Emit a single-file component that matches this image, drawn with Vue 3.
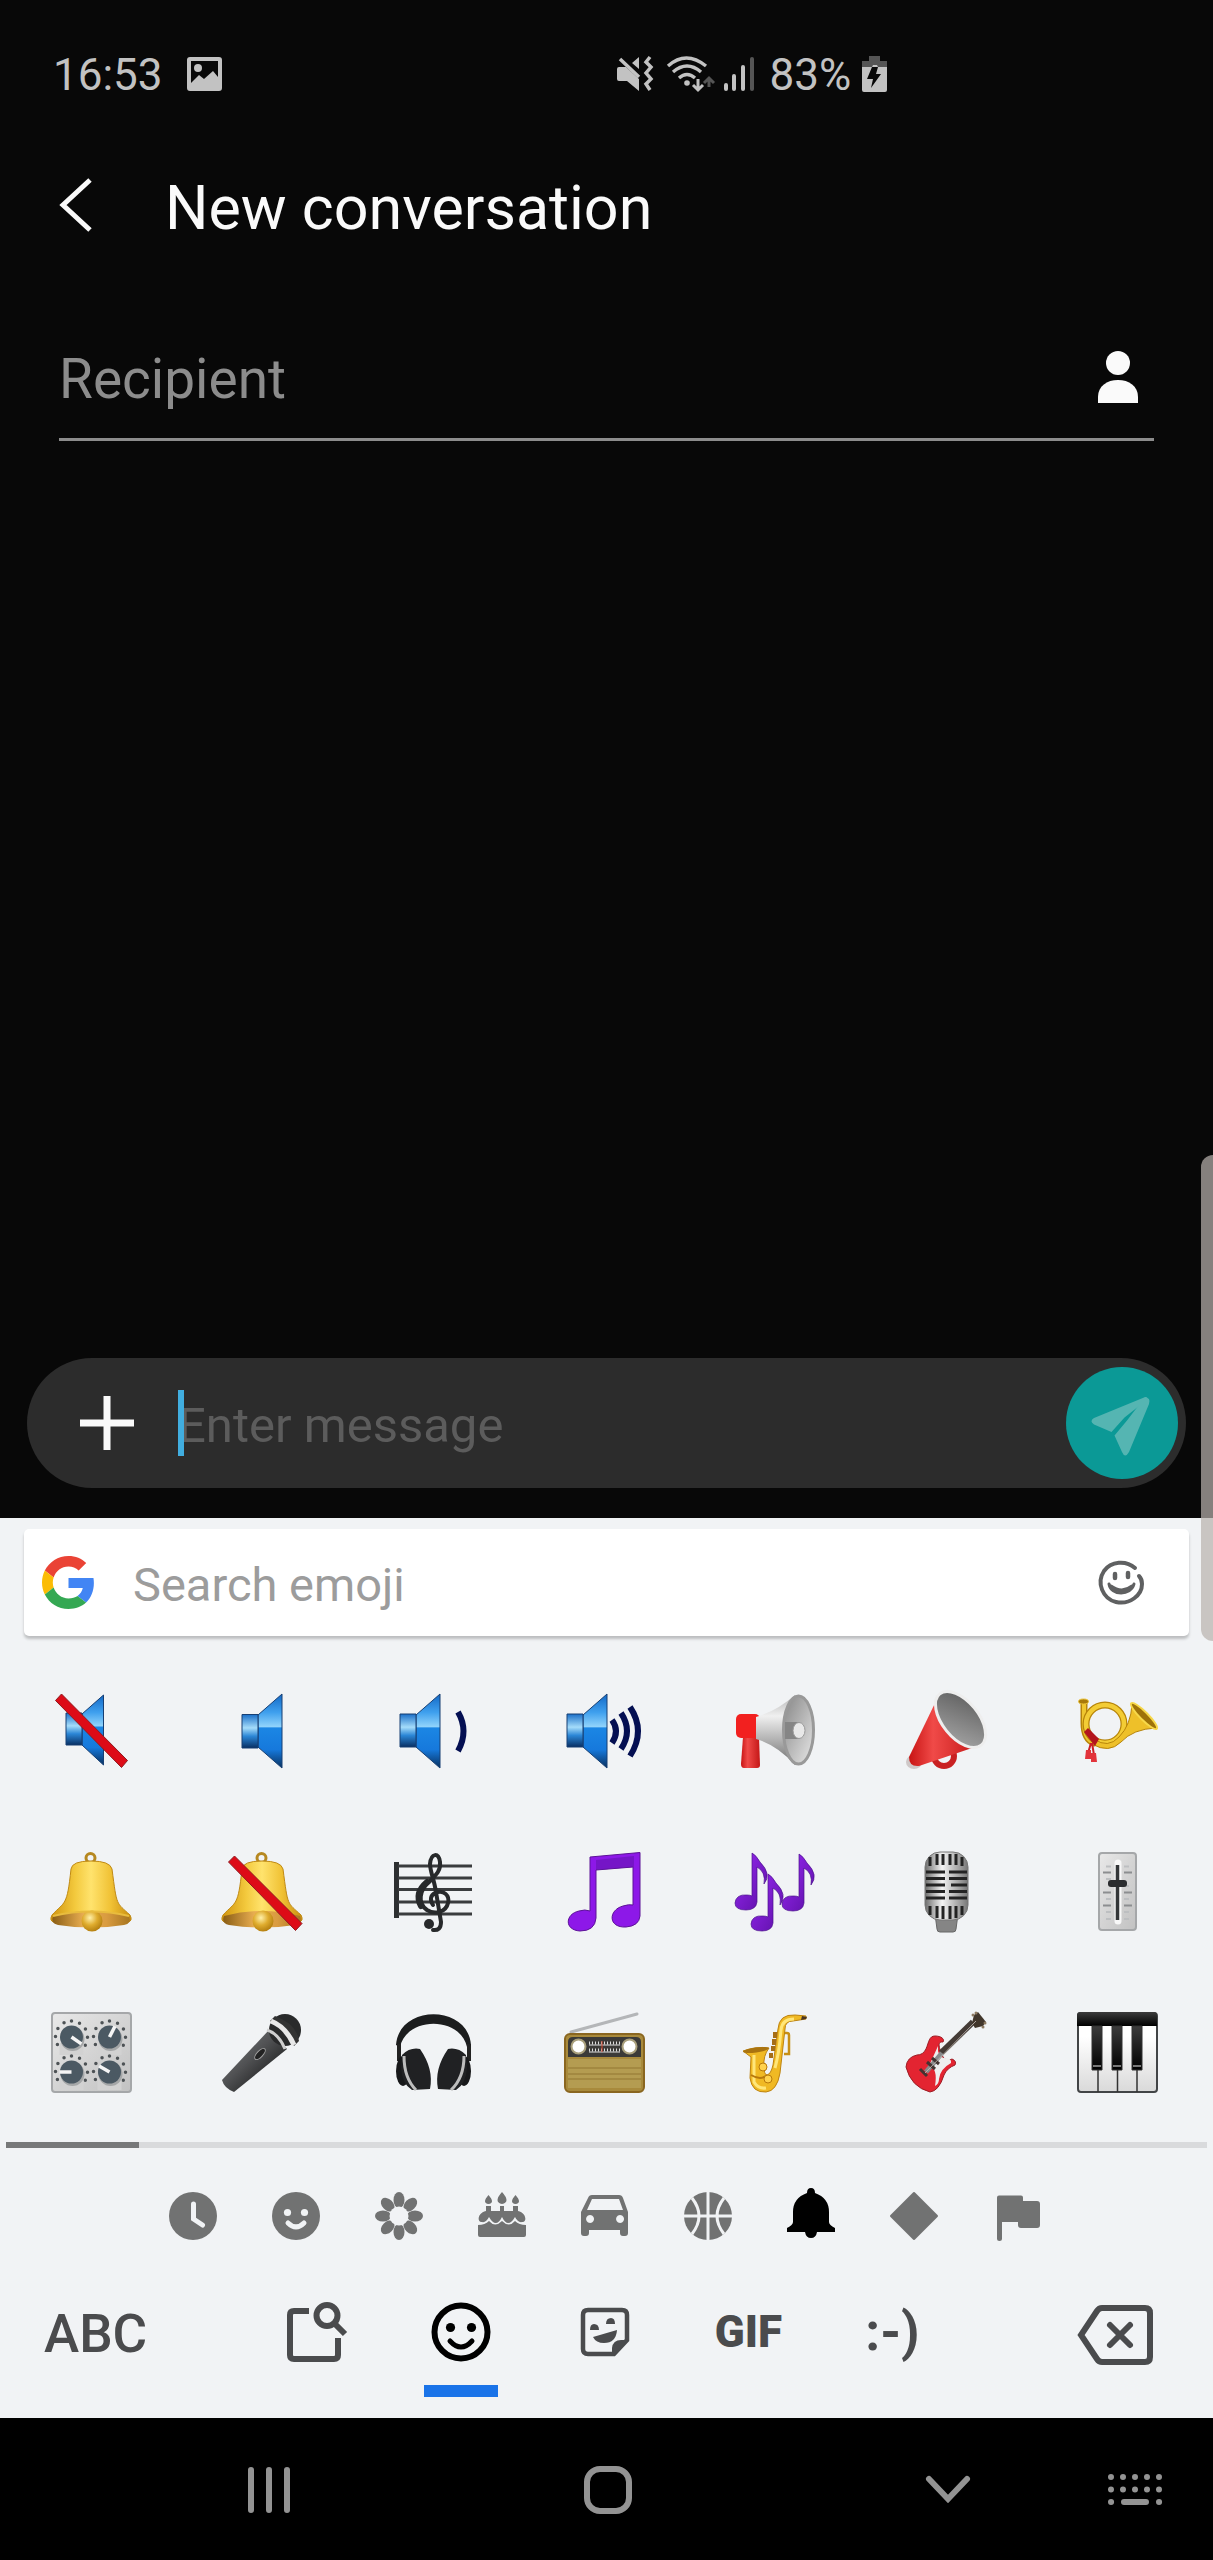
<template>
  <div class="phone">
    <header class="status-bar">
      <div class="status-left">
        <span>16:53</span>
        <svg width="35" height="34" viewBox="0 0 35 34">
          <path fill="#c2c2c2" fill-rule="evenodd" d="M3 0h29a3 3 0 0 1 3 3v28a3 3 0 0 1-3 3H3a3 3 0 0 1-3-3V3a3 3 0 0 1 3-3zM4 4v22l8-8 5 4 9-8 5 6V4z" />
          <circle cx="11" cy="11" r="4" fill="#c2c2c2" />
        </svg>
      </div>
      <div class="status-right">
        <svg class="mute" width="35" height="36" viewBox="0 0 35 36">
          <path fill="#c2c2c2" d="M2 11h7l13 12v12L10 25H2a2 2 0 0 1-2-2V13a2 2 0 0 1 2-2zM22 1v12l-7-6z" />
          <path d="M3 3l19 18M33 1l-4 5 5 5-5 6 5 6-5 5 4 6" fill="none" stroke="#c2c2c2" stroke-width="3.500" />
        </svg>
        <svg class="wifi" width="47" height="36" viewBox="0 0 47 36">
          <g fill="none" stroke="#c2c2c2" stroke-width="3.4">
            <path d="M1 10q18-16 38 0M6 16q14-12 28 0M12 22q8-7 16 0" />
            <path d="M31 23v10M26 29l5 5 5-5" stroke-width="3" />
          </g>
          <circle cx="20" cy="27" r="2.8" fill="#c2c2c2" />
          <path d="M42 31V22M37 27l5-5 5 5" fill="none" stroke="#555" stroke-width="3" />
        </svg>
        <svg class="signal" width="30" height="34" viewBox="0 0 30 34">
          <g stroke="#c2c2c2" stroke-width="4" stroke-linecap="round">
            <path d="M2 28v4M10 19v13M19 10v22" />
            <path d="M28 2v30" stroke="#555" />
          </g>
        </svg>
        <span>83%</span>
        <svg class="battery" width="25" height="36" viewBox="0 0 25 36">
          <path d="M7 0h11v5h7v6H0V5h7z" fill="#555" />
          <path d="M0 11h10l1-2h4l1 2h9v23a2 2 0 0 1-2 2H2a2 2 0 0 1-2-2z" fill="#c2c2c2" />
          <path d="M10 11h6l-2 7h5L9 32l2-9H5z" fill="#080808" />
        </svg>
      </div>
    </header>

    <div class="title-bar">
      <button class="icon-btn" type="button" aria-label="Back">
        <svg width="34" height="54" viewBox="0 0 34 54">
          <path d="M31 1L4 26l27 25" fill="none" stroke="#fafafa" stroke-width="5" />
        </svg>
      </button>
      <h1>New conversation</h1>
    </div>

    <div class="recipient">
      <input v-model="recipient" type="text" placeholder="Recipient" aria-label="Recipient">
      <button class="icon-btn" type="button" aria-label="Contacts">
        <svg width="40" height="52" viewBox="0 0 40 52">
          <circle cx="20" cy="12" r="12" fill="#fafafa" />
          <path d="M0 52V46C0 35 9 29 20 29s20 6 20 17v6z" fill="#fafafa" />
        </svg>
      </button>
    </div>

    <main class="thread"></main>

    <form class="compose" @submit.prevent>
      <button class="icon-btn" type="button" aria-label="Attach">
        <svg width="54" height="54" viewBox="0 0 54 54">
          <path d="M27 0v54M0 27h54" stroke="#fafafa" stroke-width="7" />
        </svg>
      </button>
      <div class="message-field">
        <input v-model="message" type="text" placeholder="Enter message" aria-label="Message">
      </div>
      <button class="send-btn" type="submit" aria-label="Send">
        <svg width="112" height="112" viewBox="0 0 112 112">
          <g fill="#55b5b2">
            <path d="M78 30.500Q81 29 82 32L58.500 50.500 45.500 65 28 57.500Q23 54 28 51z" />
            <path d="M83 32Q84 34 83 37L63 85Q59 92 56 85L48.500 68.500 61 53.500 79 30z" />
          </g>
        </svg>
      </button>
    </form>

    <section class="keyboard">
      <div class="search">
        <svg width="53" height="53" viewBox="0 0 48 48">
          <path fill="#ea4335" d="M24 9.500c3.540 0 6.710 1.220 9.210 3.600l6.850-6.850C35.900 2.380 30.470 0 24 0 14.620 0 6.510 5.380 2.560 13.220l7.980 6.190C12.430 13.720 17.740 9.500 24 9.500z" />
          <path fill="#4285f4" d="M46.980 24.550c0-1.570-.15-3.090-.38-4.550H24v9.020h12.940c-.58 2.960-2.260 5.480-4.780 7.180l7.730 6c4.510-4.180 7.090-10.360 7.090-17.650z" />
          <path fill="#fbbc05" d="M10.530 28.590c-.48-1.450-.76-2.990-.76-4.590s.27-3.140.76-4.590l-7.980-6.190C.92 16.460 0 20.120 0 24c0 3.880.92 7.540 2.560 10.780l7.970-6.190z" />
          <path fill="#34a853" d="M24 48c6.480 0 11.930-2.130 15.890-5.810l-7.730-6c-2.150 1.450-4.920 2.300-8.160 2.300-6.260 0-11.570-4.220-13.470-9.910l-7.980 6.190C6.510 42.620 14.620 48 24 48z" />
        </svg>
        <input v-model="query" type="text" placeholder="Search emoji" aria-label="Search emoji">
        <button class="icon-btn" type="button" aria-label="Draw emoji">
          <svg width="48" height="44" viewBox="0 0 48 44">
            <g fill="none" stroke="#5f6061" stroke-width="4" stroke-linecap="round">
              <path d="M37 7C28-1 13 0 6 10-2 22 5 38 18 41c14 3 26-7 26-18q0-5-3-8" />
              <path d="M17 13v4M30 12v4" stroke-width="4.500" />
              <path d="M11 23c2 12 22 12 25 0M13 25q11 8 21 0" stroke-width="3" />
            </g>
          </svg>
        </button>
      </div>

      <!-- shared gradients for the emoji drawings -->
      <svg class="defs" width="0" height="0" aria-hidden="true">
        <defs>
          <linearGradient id="blue" x1="0" y1="0" x2="0" y2="1">
            <stop offset="0" stop-color="#1268c6" />
            <stop offset=".25" stop-color="#3fa0ee" />
            <stop offset=".44" stop-color="#90d3fb" />
            <stop offset=".46" stop-color="#1b86e4" />
            <stop offset=".75" stop-color="#1679dc" />
            <stop offset="1" stop-color="#08305f" />
          </linearGradient>
          <linearGradient id="blueBox" x1="0" y1="0" x2="0" y2="1">
            <stop offset="0" stop-color="#1a6fc8" />
            <stop offset=".4" stop-color="#a5dcfa" />
            <stop offset=".65" stop-color="#2b86d6" />
            <stop offset="1" stop-color="#082f63" />
          </linearGradient>
          <linearGradient id="gold" x1="0" y1="0" x2="1" y2="0">
            <stop offset="0" stop-color="#d0940f" />
            <stop offset=".3" stop-color="#f3c93d" />
            <stop offset=".5" stop-color="#ffe36d" />
            <stop offset=".75" stop-color="#f0c134" />
            <stop offset="1" stop-color="#c98d10" />
          </linearGradient>
          <linearGradient id="rim" x1="0" y1="0" x2="1" y2="0">
            <stop offset="0" stop-color="#8a5d14" />
            <stop offset=".4" stop-color="#e8ad51" />
            <stop offset=".7" stop-color="#d99b40" />
            <stop offset="1" stop-color="#a87620" />
          </linearGradient>
          <radialGradient id="ball" cx=".4" cy=".35" r=".7">
            <stop offset="0" stop-color="#fff0a8" />
            <stop offset=".5" stop-color="#dfac2e" />
            <stop offset="1" stop-color="#b07a0c" />
          </radialGradient>
          <linearGradient id="silver" x1="0" y1="0" x2="0" y2="1">
            <stop offset="0" stop-color="#b5b5b5" />
            <stop offset=".3" stop-color="#f0f0f0" />
            <stop offset=".65" stop-color="#b0b0b0" />
            <stop offset="1" stop-color="#6e6e6e" />
          </linearGradient>
          <linearGradient id="dish" x1="0" y1="0" x2="1" y2="1">
            <stop offset="0" stop-color="#858585" />
            <stop offset="1" stop-color="#e8e8e8" />
          </linearGradient>
          <linearGradient id="inner" x1="0" y1="0" x2="1" y2="1">
            <stop offset="0" stop-color="#5a5a5a" />
            <stop offset="1" stop-color="#a9a9a9" />
          </linearGradient>
          <linearGradient id="red" x1="0" y1="0" x2="1" y2="0">
            <stop offset="0" stop-color="#c81414" />
            <stop offset=".35" stop-color="#f04a48" />
            <stop offset="1" stop-color="#c41717" />
          </linearGradient>
          <linearGradient id="purple" x1="0" y1="0" x2="1" y2="1">
            <stop offset="0" stop-color="#9a2af5" />
            <stop offset="1" stop-color="#5c0fa5" />
          </linearGradient>
          <linearGradient id="panel" x1="0" y1="0" x2="1" y2="1">
            <stop offset="0" stop-color="#e9e9e9" />
            <stop offset=".5" stop-color="#d4d4d4" />
            <stop offset="1" stop-color="#c2c2c2" />
          </linearGradient>
          <linearGradient id="steel" x1="0" y1="0" x2="1" y2="0">
            <stop offset="0" stop-color="#6d6d6d" />
            <stop offset=".4" stop-color="#f4f4f4" />
            <stop offset="1" stop-color="#777" />
          </linearGradient>
          <linearGradient id="grip" x1="0" y1="0" x2="1" y2="1">
            <stop offset=".2" stop-color="#6b6c6e" />
            <stop offset=".45" stop-color="#505153" />
            <stop offset=".7" stop-color="#2c2d2e" />
          </linearGradient>
          <linearGradient id="black" x1="0" y1="0" x2="0" y2="1">
            <stop offset="0" stop-color="#3c3c3c" />
            <stop offset="1" stop-color="#000" />
          </linearGradient>
          <linearGradient id="keys" x1="0" y1="0" x2="0" y2="1">
            <stop offset=".3" stop-color="#fff" />
            <stop offset="1" stop-color="#d9d9d9" />
          </linearGradient>
        </defs>
      </svg>

      <div class="emoji-grid">
        <button type="button" aria-label="Muted speaker">
          <svg viewBox="0 0 81 81">
            <path d="M31 23L52.500 4v70L31 54z" fill="url(#blue)" stroke="#173f73" />
            <path d="M15 22h16v32H15z" fill="url(#blueBox)" stroke="#173f73" />
            <path d="M4.500 9.500l6-6.500 66 66.500-6 7z" fill="#dd0b17" stroke="#8f1a1f" />
          </svg>
        </button>
        <button type="button" aria-label="Speaker low volume">
          <svg viewBox="0 0 81 81">
            <path d="M36 24L60 3v74L36 56z" fill="url(#blue)" stroke="#173f73" />
            <path d="M20 23.500h16v33.500H20z" fill="url(#blueBox)" stroke="#173f73" />
          </svg>
        </button>
        <button type="button" aria-label="Speaker medium volume">
          <svg viewBox="0 0 81 81">
            <path d="M23 24L47 3v74L23 56z" fill="url(#blue)" stroke="#173f73" />
            <path d="M7 23h16v33H7z" fill="url(#blueBox)" stroke="#173f73" />
            <path d="M65 21q11 19 0 39" fill="none" stroke="#040f52" stroke-width="6" />
          </svg>
        </button>
        <button type="button" aria-label="Speaker high volume">
          <svg viewBox="0 0 81 81">
            <path d="M19 24L43 3v74L19 56z" fill="url(#blue)" stroke="#173f73" />
            <path d="M3 23h16v33H3z" fill="url(#blueBox)" stroke="#173f73" />
            <path d="M48 29q8 11 0 23M57 22q12 18 0 36M66 16q16 24 0 49" fill="none" stroke="#040f52" stroke-width="6" />
          </svg>
        </button>
        <button type="button" aria-label="Loudspeaker">
          <svg viewBox="0 0 81 81">
            <path d="M8 46h16l1 28q0 3-3 3H9q-3 0-3-4z" fill="url(#red)" />
            <rect x="1" y="23" width="24" height="24" rx="5" fill="#f2201f" />
            <path d="M21 26Q42 20 60 4v70Q42 54 21 48z" fill="url(#silver)" />
            <ellipse cx="63.500" cy="39" rx="15" ry="34" fill="url(#dish)" stroke="#999" stroke-width="3" />
            <path d="M50 31h14v17H50z" fill="#858585" />
            <ellipse cx="64" cy="39.500" rx="6" ry="8" fill="#e8e8e8" stroke="#999" />
          </svg>
        </button>
        <button type="button" aria-label="Megaphone">
          <svg viewBox="0 0 81 81">
            <circle cx="38" cy="65" r="10" fill="none" stroke="#c92122" stroke-width="6" />
            <ellipse cx="8" cy="71" rx="8" ry="7" fill="#cfc8c8" />
            <path d="M31 8L3 66q0 10 10 9l59-20z" fill="url(#red)" />
            <ellipse cx="54.500" cy="28.500" rx="33" ry="18" transform="rotate(51 54.500 28.500)" fill="url(#inner)" stroke="#eee" stroke-width="3" />
          </svg>
        </button>
        <button type="button" aria-label="Postal horn">
          <svg viewBox="0 0 81 81">
            <g fill="none" stroke-linecap="round">
              <path d="M7 12v20q0 16 10 20" stroke="#b78409" stroke-width="7" />
              <path d="M7 12v20q0 16 10 20" stroke="#efc62f" stroke-width="4" />
              <circle cx="28" cy="33" r="19" stroke="#b78409" stroke-width="7" />
              <circle cx="28" cy="33" r="19" stroke="#f3cc35" stroke-width="4.500" />
            </g>
            <path d="M17 48q14 10 25-2 12-12 13-33l24 24Q56 38 44 51 32 63 15 53z" fill="#eec029" stroke="#b78409" />
            <ellipse cx="67" cy="25" rx="18" ry="4" transform="rotate(45 67 25)" fill="#9e7209" stroke="#f7d849" stroke-width="2" />
            <ellipse cx="6.500" cy="10.500" rx="5" ry="2.500" fill="#a8790b" stroke="#edc437" />
            <path d="M7 41l4-4 11 11-4 7z" fill="#b3151d" />
            <path d="M14 52l-3 10M15 52l2 12" stroke="#cc1d25" stroke-width="2" />
            <path d="M9 59h5v9H8zM14 62h5l1 9h-6z" fill="#e2333b" />
          </svg>
        </button>

        <button type="button" aria-label="Bell">
          <svg viewBox="0 0 81 81">
            <circle cx="39.500" cy="6" r="4.500" fill="none" stroke="#b68820" stroke-width="3" />
            <path d="M20 17Q21 9 40 9t21 8c5 38 4 33 18 46q3 6-2 7-37 8-74 0-5-1-2-7C14 49 16 55 20 17z" fill="url(#gold)" stroke="#c08a14" />
            <path d="M2 64q38-10 76 0 3 8-5 9-33 5-66 0-8-2-5-9z" fill="url(#rim)" />
            <circle cx="41" cy="69" r="10.500" fill="url(#ball)" />
            <path d="M2 64q38-9 76 0" fill="none" stroke="#e9bc3e" stroke-width="2" />
          </svg>
        </button>
        <button type="button" aria-label="Muted bell">
          <svg viewBox="0 0 81 81">
            <circle cx="39.500" cy="6" r="4.500" fill="none" stroke="#b68820" stroke-width="3" />
            <path d="M20 17Q21 9 40 9t21 8c5 38 4 33 18 46q3 6-2 7-37 8-74 0-5-1-2-7C14 49 16 55 20 17z" fill="url(#gold)" stroke="#c08a14" />
            <path d="M2 64q38-10 76 0 3 8-5 9-33 5-66 0-8-2-5-9z" fill="url(#rim)" />
            <circle cx="41" cy="69" r="10.500" fill="url(#ball)" />
            <path d="M6.500 10l6-6L80 71.500l-6.500 7z" fill="#dd0b17" stroke="#8f1a1f" />
          </svg>
        </button>
        <button type="button" aria-label="Musical score">
          <svg viewBox="0 0 81 81">
            <path d="M1 10h5v56H1z" fill="#2d2f31" />
            <path d="M5 14h74M5 26h74M5 37.500h74M5 50h74M5 62h74" stroke="#3a3c3e" stroke-width="3" />
            <g fill="none" stroke="#27292b" stroke-linecap="round">
              <path d="M40 53q-5-8 2-12c9-4 15 3 13 10-2 9-13 12-21 7-10-7-7-20 1-27 8-8 13-12 12-21-1-10-9-9-10 2 0 7 4 15 6 28l5 30q0 9-8 8" stroke-width="4" />
              <path d="M28 54q-7-13 6-24" stroke-width="6" />
            </g>
            <circle cx="36" cy="72" r="5" fill="#27292b" />
          </svg>
        </button>
        <button type="button" aria-label="Musical note">
          <svg viewBox="0 0 81 81">
            <path d="M26 5L76 .500V64q-1 10-14 11c-18 1-18-17-3-21q6-2 10-1V15L32 18v48q-1 13-16 13C0 78 1 62 15 59q6-2 11 0z" fill="#8d18e8" stroke="#5c1297" />
            <path d="M32 8l38-4v11L32 18z" fill="#5d11a5" opacity=".5" />
          </svg>
        </button>
        <button type="button" aria-label="Musical notes">
          <svg viewBox="0 0 81 81">
            <g fill="url(#purple)" stroke="#4b118c" stroke-width=".7">
              <path d="M17 1q4 2 8 9 12 12 4 22 2-12-7-17v35q-1 8-11 8-11 0-11-7 1-9 12-8 3 0 5 1z" />
              <path d="M33 22q4 2 8 9 12 12 4 22 2-12-7-17v35q-1 8-11 8-11 0-11-7 1-9 12-8 3 0 5 1z" />
              <path d="M64 2q4 2 8 9 12 12 4 22 2-12-7-17v35q-1 8-11 8-11 0-11-7 1-9 12-8 3 0 5 1z" />
            </g>
          </svg>
        </button>
        <button type="button" aria-label="Studio microphone">
          <svg viewBox="0 0 81 81">
            <path d="M29 62h23l-2 15q0 3-3 3H34q-3 0-3-3z" fill="#858585" stroke="#666" />
            <rect x="19" y="0" width="43" height="68" rx="15" fill="url(#steel)" stroke="#777" />
            <path d="M24 5v9M31 2v11M37 2v11M44 2v11M50 2v11M56 5v9M24 54v9M31 54v12M37 54v13M44 54v13M50 54v12M56 54v9M20 20h19M43 20h18M20 26.500h19M43 26.500h18M20 33h19M45 33h16M20 39.500h19M43 39.500h18M20 46h19M43 46h18" stroke="#232323" stroke-width="3" />
          </svg>
        </button>
        <button type="button" aria-label="Level slider">
          <svg viewBox="0 0 81 81">
            <rect x="22" y="1" width="37" height="77" rx="3" fill="url(#panel)" stroke="#a5a7a9" stroke-width="2" />
            <path d="M41 11v58" stroke="#f8f8f8" stroke-width="7" stroke-linecap="round" />
            <path d="M40.500 13v55" stroke="#333638" stroke-width="3.500" />
            <path d="M29 14.500h5M29 27h5M29 47h5M29 60h5M29 67h5M47 14.500h5M47 34h5M47 47h5M47 60h5M47 67h5" stroke="#bdbfc1" stroke-width="2" />
            <path d="M26 20.500h8M26 40.500h8M26 53.500h8M47 20.500h8M47 40.500h8M47 53.500h8" stroke="#8c8e90" stroke-width="2" />
            <rect x="31" y="28" width="19" height="7" rx="3" fill="#2b2d2f" />
          </svg>
        </button>

        <button type="button" aria-label="Control knobs">
          <svg viewBox="0 0 81 81">
            <rect x="1" y="0" width="79" height="79" rx="3" fill="url(#panel)" stroke="#a5a7a9" stroke-width="2" />
            <g v-for="knob in knobs" :key="knob.id" :transform="`translate(${knob.x} ${knob.y})`">
              <circle r="16" fill="none" stroke="#4d5255" stroke-width="3.500" stroke-linecap="round" stroke-dasharray="0 8.377" transform="rotate(-90)" />
              <path d="M-12 18h24v-12h-24z" fill="#d2d2d2" />
              <circle cx="1" cy="2" r="12" fill="#a5a7a8" />
              <circle r="11.500" fill="#4b5963" />
              <path d="M0 0h12" stroke="#f5f5f5" stroke-width="3.500" :transform="`rotate(${knob.angle})`" />
            </g>
          </svg>
        </button>
        <button type="button" aria-label="Microphone">
          <svg viewBox="0 0 81 81">
            <path d="M47 17L0 67q2 8 12 12l53-43z" fill="url(#grip)" />
            <circle cx="63" cy="17" r="16" fill="#292a2b" />
            <path d="M48 8l5-5q22 8 24 25l-5 5Q66 16 48 8z" fill="#333" />
            <path d="M49 8q15 6 23 24" fill="none" stroke="#e8e8e8" stroke-width="5" />
            <path d="M45 17q12 4 18 19" fill="none" stroke="#cfcfcf" stroke-width="3" />
            <ellipse cx="38" cy="41" rx="7" ry="3" transform="rotate(-47 38 41)" fill="#222" stroke="#a0a0a0" />
          </svg>
        </button>
        <button type="button" aria-label="Headphones">
          <svg viewBox="0 0 81 81">
            <path d="M3 32C6-9 75-9 78 32l-4 2C67 3 14 3 7 34z" fill="#1c1d1e" />
            <path d="M6 31v17M76 31v17" stroke="#222" stroke-width="4" />
            <ellipse cx="10" cy="58" rx="7" ry="15" fill="#17181a" />
            <ellipse cx="71" cy="58" rx="7" ry="15" fill="#17181a" />
            <path d="M9 42q8-8 18-6 14 20 10 40l-18 1Q9 71 8 55zM73 42q-8-8-18-6-14 20-10 40l18 1q10-6 11-22z" fill="#202123" />
            <path d="M11 43q0 22 12 34M71 43q0 22-13 34" fill="none" stroke="#bdbdbd" stroke-width="3" />
          </svg>
        </button>
        <button type="button" aria-label="Radio">
          <svg viewBox="0 0 81 81">
            <path d="M7 19L73 1" stroke="#b4b6b8" stroke-width="3" stroke-linecap="round" />
            <rect x="1" y="21" width="79" height="58" rx="5" fill="#a88a3c" stroke="#8a6620" stroke-width="2" />
            <path d="M4 44V29q0-5 5-5h63q5 0 5 5v15z" fill="#3b3a38" />
            <path d="M4 46h73v29H4z" fill="#b49c51" />
            <path d="M4 55h73M4 61h73M4 66h73" stroke="#927632" />
            <circle cx="14.500" cy="33.500" r="7" fill="#fff" stroke="#aaa07c" stroke-width="2" />
            <circle cx="65.500" cy="33.500" r="7" fill="#fff" stroke="#aaa07c" stroke-width="2" />
            <path d="M25 32h31M25 39h31" stroke="#ddd" />
            <path d="M25 30h31M25 37h31" stroke="#ddd" stroke-width="3" stroke-dasharray="1 2" />
            <path d="M38 28v11" stroke="#d5442d" />
          </svg>
        </button>
        <button type="button" aria-label="Saxophone">
          <svg viewBox="0 0 81 81">
            <path d="M46 20h6q2 0 2 2v19h-5" fill="none" stroke="#c78f16" stroke-width="2.500" />
            <path d="M8 38q13-5 26-3-6 8-5 18 0 9 3 9 4-1 6-10L43 16Q44 1 60 2l11 1v3l-13 2q-8 0-8 8L45 60q-3 18-14 19-14 1-16-14l1-21z" fill="#f0b924" stroke="#bd8310" />
            <path d="M19 42v27q4 7 12 6M40 55q4-14 6-38 1-11 13-11" fill="none" stroke="#ffe679" stroke-width="3" />
            <ellipse cx="21" cy="37" rx="13" ry="2.500" transform="rotate(-8 21 37)" fill="#a97310" />
            <path d="M16 62q10 6 16 0" fill="none" stroke="#b8790b" stroke-width="2" />
            <circle cx="28" cy="54" r="4" fill="#ffd24d" stroke="#b8790b" />
            <circle cx="33" cy="66" r="4" fill="#ffd24d" stroke="#b8790b" />
            <path d="M40 19v6M39 26v6M38 33v5M36 40v5" stroke="#a66e16" stroke-width="4" />
            <path d="M67 3l5 1-1 2-5 1z" fill="#493525" />
          </svg>
        </button>
        <button type="button" aria-label="Guitar">
          <svg viewBox="0 0 81 81">
            <path d="M20 36c3-7 3-13 9-13 6 0 10 3 8 6-7-1-3 8 0 15q4 5 9 2 5 2 3 6-8 3-11 10-5 16-14 17Q5 74 0 54q1-10 11-12 6 0 9-6z" fill="#e32431" stroke="#9c1d25" />
            <path d="M32 33q-1 10 6 12 8 0 7 5-11 6-12 16 0 5-4 7 3-18-6-20z" fill="#eee" />
            <path d="M35 40L67 9" stroke="#443b36" stroke-width="6" />
            <path d="M66 10l2-8 4-3 8 10-3 4-8 2z" fill="#41362b" />
            <g fill="#8d7a61">
              <circle cx="67" cy="2" r="1.500" />
              <circle cx="70" cy="0" r="1.500" />
              <circle cx="79" cy="10" r="1.500" />
              <circle cx="77" cy="14" r="1.500" />
            </g>
            <path d="M20 59l16-19" stroke="#87898a" stroke-width="5" />
            <path d="M14 56l7 7M21 49l8 7M26 45l7 6" stroke="#423331" stroke-width="3" />
            <path d="M19 60L70 8" stroke="#c9c2bb" stroke-width=".8" />
          </svg>
        </button>
        <button type="button" aria-label="Piano keys">
          <svg viewBox="0 0 81 81">
            <rect x="1" y="0" width="79" height="79" rx="3" fill="url(#keys)" stroke="#424446" stroke-width="2" />
            <path d="M21 50v29M40.500 50v29M60 50v29" stroke="#333" stroke-width="1.500" />
            <path d="M0 13V2q0-3 3-3h74q3 0 3 3v11z" fill="url(#black)" />
            <path d="M15 13h10v44H15zM35 13h10v44H35zM55 13h10v44H55z" fill="url(#black)" stroke="#333" />
            <path d="M16 53h8M36 53h8M56 53h8" stroke="#777" stroke-width="2" />
          </svg>
        </button>
      </div>

      <div class="page-track"><div class="page-thumb"></div></div>

      <div class="categories">
        <button type="button" aria-label="Recent">
          <svg viewBox="0 0 48 48">
            <circle cx="24" cy="24" r="24" />
            <path class="cut" d="M24.500 12v15l9 6" />
          </svg>
        </button>
        <button type="button" aria-label="Smileys">
          <svg viewBox="0 0 48 48">
            <circle cx="24" cy="24" r="24" />
            <circle cx="15.500" cy="20.500" r="3.600" fill="#f1f3f5" />
            <circle cx="32.500" cy="20.500" r="3.600" fill="#f1f3f5" />
            <path class="cut" d="M16 31q8 8 16 0" />
          </svg>
        </button>
        <button type="button" aria-label="Nature">
          <svg viewBox="0 0 48 48">
            <ellipse v-for="n in 8" :key="n" cx="24" cy="8" rx="5.500" ry="8" :transform="`rotate(${n * 45} 24 24)`" />
            <circle cx="24" cy="24" r="9.500" fill="#f1f3f5" />
          </svg>
        </button>
        <button type="button" aria-label="Food">
          <svg viewBox="0 0 48 48">
            <path d="M10.500 3q7 8 0 9-7-1 0-9zM24 0q9 10 0 12-9-2 0-12zM37.500 3q7 8 0 9-7-1 0-9z" />
            <path d="M8 14h5v5h9v-5h4v5h9v-5h5v5c9 2 9 12 4 11q-4 1-7-5-7 12-13 0-6 12-13 0-3 6-7 5c-5 1-5-9 4-11z" />
            <path d="M0 33q7 0 11-4 6 7 13 0 7 7 13 0 4 4 11 4v10q0 2-2 2H2q-2 0-2-2z" />
          </svg>
        </button>
        <button type="button" aria-label="Travel">
          <svg viewBox="0 0 48 48">
            <path fill-rule="evenodd" d="M7 6q1-3 4-3h27q3 0 4 3l5 14v21q0 3-3 3h-2q-3 0-3-3v-3H8v3q0 3-3 3H3q-3 0-3-3V20zM11 7L6 18h36L38 7zM9 23a4 4 0 1 0 .1 0zM39 23a4 4 0 1 0 .1 0z" />
          </svg>
        </button>
        <button type="button" aria-label="Activities">
          <svg viewBox="0 0 48 48">
            <circle cx="24" cy="24" r="24" />
            <path d="M24 0v48M0 24h48M8 6q14 18 0 36M40 6q-14 18 0 36" fill="none" stroke="#f1f3f5" stroke-width="3" />
          </svg>
        </button>
        <button class="current" type="button" aria-label="Objects">
          <svg viewBox="0 0 48 48">
            <path d="M24-4q4 0 4 5 14 5 14 19v10q0 3 6 6v4H30q-1 6-6 6t-6-6H0v-4q6-3 6-6V20Q6 6 20 1q0-5 4-5z" />
          </svg>
        </button>
        <button type="button" aria-label="Symbols">
          <svg viewBox="0 0 48 48">
            <path d="M22.500 1Q24-1 25.500 1L47 22.500q2 1.500 0 3L25.500 47q-1.500 2-3 0L1 25.500q-2-1.500 0-3z" />
          </svg>
        </button>
        <button type="button" aria-label="Flags">
          <svg viewBox="0 0 48 48">
            <path d="M6 3.500h22q2 0 2 2V9h14q3 0 3 3v21q0 3-3 3H28q-3 0-3-3v-3H9v16.500q0 2.500-2.500 2.500T4 46.500v-41q0-2 2-2z" />
          </svg>
        </button>
      </div>

      <div class="toolbar">
        <button class="tool abc" type="button">ABC</button>
        <div class="tabs">
          <button class="tool" type="button" aria-label="Sticker search">
            <svg width="60" height="60" viewBox="0 0 60 60">
              <g fill="none" stroke="#4a4b4d" stroke-width="6">
                <path d="M22 9H7q-4 0-4 4v40q0 4 4 4h40q4 0 4-4V36" />
                <circle cx="40" cy="13.500" r="10.500" />
                <path d="M47 21l11 11" />
              </g>
            </svg>
          </button>
          <button class="tool active" type="button" aria-label="Emoji">
            <svg width="60" height="60" viewBox="0 0 60 60">
              <circle cx="30" cy="30" r="26.500" fill="none" stroke="#000" stroke-width="6" />
              <circle cx="19.500" cy="25.500" r="4.600" />
              <circle cx="40.500" cy="25.500" r="4.600" />
              <path d="M19 39q11 12 22 0" fill="none" stroke="#000" stroke-width="5" stroke-linecap="round" />
            </svg>
          </button>
          <button class="tool" type="button" aria-label="Stickers">
            <svg width="50" height="50" viewBox="0 0 50 50">
              <path d="M8 3h34q5 0 5 5v25L34 47H8q-5 0-5-5V8q0-5 5-5z" fill="none" stroke="#4a4b4d" stroke-width="4.500" />
              <path d="M48 33L35 48h-3v-7q1-8 9-8z" fill="#4a4b4d" />
              <path d="M10 23q0-6 4-6 5 0 5 6zM26 17q0-6 5-6 4 0 4 6z" fill="#4a4b4d" />
              <path d="M13 30l24-7q-1 13-13 13-8 0-11-6z" fill="#4a4b4d" />
            </svg>
          </button>
          <button class="tool gif" type="button">GIF</button>
          <button class="tool smile" type="button">:-)</button>
        </div>
        <button class="tool backspace" type="button" aria-label="Backspace">
          <svg width="75" height="60" viewBox="0 0 75 60">
            <path d="M24 3h43q5 0 5 5v44q0 5-5 5H24q-3 0-5-3L3 30 19 6q2-3 5-3z" fill="none" stroke="#4a4b4d" stroke-width="6" />
            <path d="M32 20l20 20M52 20L32 40" stroke="#4a4b4d" stroke-width="6" stroke-linecap="round" />
          </svg>
        </button>
      </div>
    </section>

    <nav class="nav-bar">
      <div class="nav-main">
        <button class="icon-btn" type="button" aria-label="Recents">
          <svg width="42" height="46" viewBox="0 0 42 46">
            <path d="M3 3v40M21 3v40M39 3v40" stroke="#939393" stroke-width="6" stroke-linecap="round" />
          </svg>
        </button>
        <button class="icon-btn" type="button" aria-label="Home">
          <svg width="48" height="48" viewBox="0 0 48 48">
            <rect x="3" y="3" width="42" height="42" rx="13" fill="none" stroke="#939393" stroke-width="6" />
          </svg>
        </button>
        <button class="icon-btn" type="button" aria-label="Hide keyboard">
          <svg width="44" height="28" viewBox="0 0 44 28">
            <path d="M3 3l19 20L41 3" fill="none" stroke="#939393" stroke-width="6" stroke-linecap="round" />
          </svg>
        </button>
      </div>
      <button class="icon-btn" type="button" aria-label="Change keyboard">
        <svg width="54" height="32" viewBox="0 0 54 32">
          <g fill="none" stroke="#939393" stroke-width="6" stroke-linecap="round">
            <path d="M3 3h49M3 15.500h49" stroke-dasharray="0 12" />
            <path d="M3 28h.1M16 28h22M51 28h.1" />
          </g>
        </svg>
      </button>
    </nav>

    <div class="edge-handle"></div>
  </div>
</template>

<script setup>
import { ref } from 'vue'

const recipient = ref('')
const message = ref('')
const query = ref('')

const knobs = [
  { id: 1, x: 20.5, y: 24, angle: 35 },
  { id: 2, x: 58.5, y: 24, angle: -63 },
  { id: 3, x: 20.5, y: 59, angle: 180 },
  { id: 4, x: 58.5, y: 59, angle: 210 },
]
</script>

<style>
body {
  background: #080808;
}
</style>

<style scoped>
.phone {
  position: relative;
  display: flex;
  flex-direction: column;
  min-height: 100vh;
  background: #080808;
  font-family: Roboto, "Liberation Sans", sans-serif;
}

button,
input {
  margin: 0;
  padding: 0;
  border: none;
  background: none;
  font-family: inherit;
}

input {
  flex: 1;
  min-width: 0;
  outline: none;
}

input::placeholder {
  color: inherit;
  opacity: 1;
}

svg {
  display: block;
  flex: none;
  overflow: visible;
}

.icon-btn {
  display: flex;
  cursor: pointer;
}

.status-bar {
  display: grid;
  grid-template-columns: 1fr 1fr;
  height: 92px;
  padding-top: 28px;
  color: #c2c2c2;
  font-size: 44px;
}

.status-bar span {
  padding-top: 2px;
}

.status-left,
.status-right {
  display: flex;
  align-items: center;
}

.status-left {
  gap: 24px;
  padding-left: 53px;
}

.status-right {
  padding-left: 10px;
}

.mute {
  margin-right: 15px;
}

.wifi {
  margin-right: 10px;
}

.signal {
  margin-right: 16px;
}

.battery {
  margin-left: 11px;
}

.title-bar {
  display: flex;
  align-items: center;
  gap: 72px;
  height: 172px;
  padding: 0 59px;
}

h1 {
  margin: 0;
  padding-top: 4px;
  color: #fafafa;
  font-size: 61px;
  font-weight: 400;
}

.recipient {
  display: flex;
  align-items: center;
  height: 122px;
  margin: 24px 59px 0;
  padding-right: 16px;
  border-bottom: 3px solid #8c8c8c;
  color: #8c8c8c;
}

.recipient input {
  padding-top: 4px;
  color: #8c8c8c;
  font-size: 55px;
}

.thread {
  flex: 1;
}

.compose {
  display: flex;
  align-items: center;
  height: 130px;
  margin: 0 27px 30px;
  padding: 0 8px 0 53px;
  border-radius: 65px;
  background: #2c2c2c;
}

.message-field {
  position: relative;
  display: flex;
  flex: 1;
  margin-left: 44px;
}

/* text caret */
.message-field::before {
  content: "";
  position: absolute;
  top: 0;
  left: 0;
  width: 6px;
  height: 66px;
  background: #41aee0;
}

.message-field input {
  height: 62px;
  padding-top: 4px;
  color: #5c5c5c;
  font-size: 49px;
}

.send-btn {
  border-radius: 50%;
  background: #0b9996;
  cursor: pointer;
}

.keyboard {
  padding-top: 11px;
  background: #f1f3f5;
}

.search {
  display: flex;
  align-items: center;
  height: 107px;
  margin: 0 24px 15px;
  padding: 0 43px 0 18px;
  border-radius: 5px;
  background: #fff;
  box-shadow: 0 3px 3px rgba(0, 0, 0, 0.22);
}

.search input {
  margin-left: 38px;
  padding-top: 4px;
  color: #9c9c9c;
  font-size: 47px;
}

.defs {
  position: absolute;
}

.emoji-grid {
  display: grid;
  grid-template-columns: repeat(7, 1fr);
  grid-auto-rows: 161px;
  padding: 0 10px 0 6px;
}

.emoji-grid button {
  display: flex;
  align-items: center;
  justify-content: center;
  cursor: pointer;
}

.emoji-grid svg {
  width: 81px;
  height: 81px;
}

.page-track {
  height: 6px;
  margin: 8px 6px 0;
  background: #d9dadc;
}

.page-thumb {
  width: 133px;
  height: 6px;
  background: #777879;
}

.categories {
  display: flex;
  justify-content: center;
  height: 136px;
  padding-right: 4px;
}

.categories button {
  display: flex;
  align-items: center;
  justify-content: center;
  width: 103px;
  cursor: pointer;
}

.categories svg {
  width: 48px;
  height: 48px;
  fill: #717272;
}

.categories .current svg {
  fill: #000;
}

.cut {
  fill: none;
  stroke: #f1f3f5;
  stroke-width: 5px;
  stroke-linecap: round;
}

.toolbar {
  display: grid;
  grid-template-columns: 1fr 720px 1fr;
  height: 134px;
  padding-right: 4px;
}

.tabs {
  display: flex;
}

.tool {
  display: flex;
  align-items: center;
  justify-content: center;
  height: 96px;
  color: #4a4b4d;
  font-weight: 500;
  cursor: pointer;
}

.tabs .tool {
  position: relative;
  width: 144px;
}

.tabs .active::after {
  content: "";
  position: absolute;
  top: 101px;
  left: 35px;
  width: 74px;
  height: 12px;
  background: #1a73e8;
}

.abc {
  justify-self: start;
  padding: 4px 0 0 44px;
  font-size: 53px;
}

.gif {
  font-size: 44px;
  font-weight: 900;
}

.smile {
  font-size: 53px;
  font-weight: 700;
}

.backspace {
  justify-self: end;
  padding: 6px 56px 0 0;
}

.nav-bar {
  display: flex;
  align-items: center;
  gap: 138px;
  height: 140px;
  padding: 2px 51px 0 248px;
  background: #000;
}

.nav-main {
  display: flex;
  flex: 1;
  align-items: center;
  justify-content: space-between;
}

.edge-handle {
  position: absolute;
  right: 0;
  bottom: 919px;
  width: 12px;
  height: 486px;
  border-radius: 12px 0 0 12px;
  background: rgba(184, 178, 173, 0.71);
}
</style>
